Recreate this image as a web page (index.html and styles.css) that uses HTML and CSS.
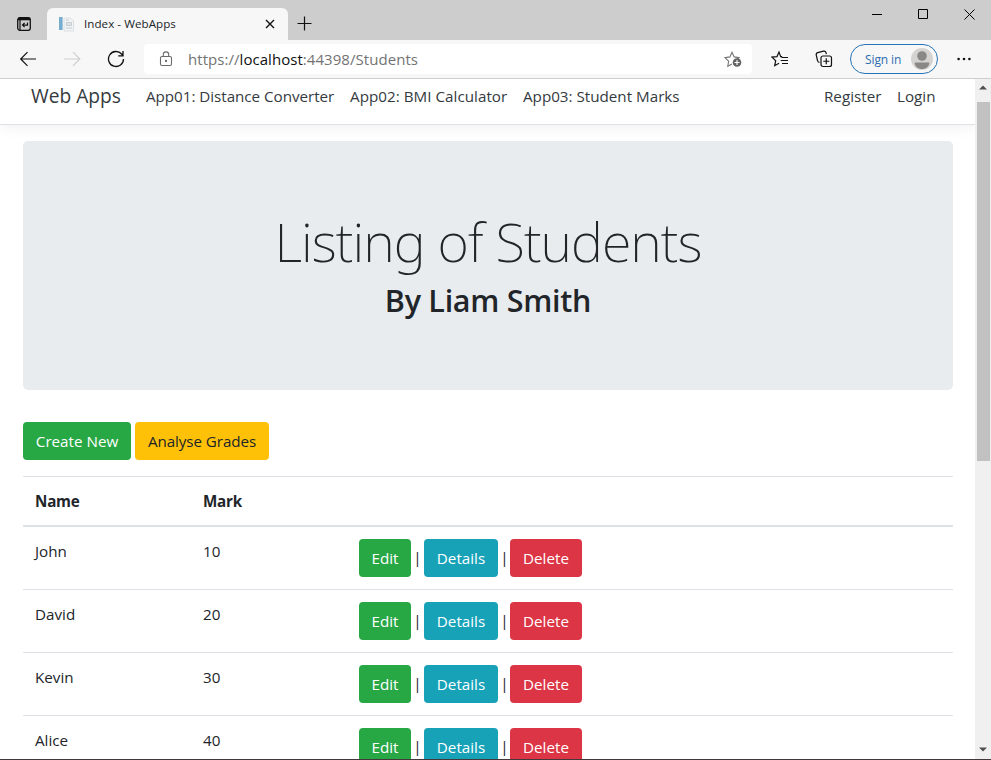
FILE: index.html
```html
<!DOCTYPE html>
<html lang="en">
<head>
<meta charset="utf-8">
<title>Index - WebApps</title>
<link rel="stylesheet" href="styles.css">
</head>
<body>
<div class="window">
  <div class="titlebar">
    <svg class="tab-actions" width="16" height="16" viewBox="0 0 16 16" fill="none" stroke="#111" stroke-width="1.3"><rect x="1.700" y="1.700" width="12.600" height="12.600" rx="2.200"/><path d="M2 3H14" stroke-width="2.600"/><path d="M4 3V14" stroke-width="1.200"/><path d="M11.500 6.500v2.600H6.800M8.600 7 6.500 9.100l2.100 2.100" stroke-width="1.200"/></svg>
    <div class="tab">
      <svg width="17" height="17" viewBox="0 0 17 17"><path d="M1 1h3.600v13H1z" fill="#75add0"/><path d="M6 2h6.500l3 3v10H6z" fill="#f1f3f4" stroke="#dce0e4"/><path d="M8 4h3M8.500 6.500h5v3h-5zM8 12h6" fill="#dfe4e8" stroke="#c4ccd3"/></svg>
      <span class="tab-title">Index - WebApps</span>
      <svg class="tab-close" width="10" height="10" viewBox="0 0 10 10" stroke="#111" stroke-width="1.4"><path d="M1 1l8 8M9 1 1 9"/></svg>
    </div>
    <svg class="new-tab" width="15" height="15" viewBox="0 0 15 15" stroke="#111" stroke-width="1.2"><path d="M7.5.5v14M.5 7.5h14"/></svg>
    <div class="window-controls">
      <svg width="10" height="12" viewBox="0 0 10 12" stroke="#000"><path d="M0 6.5h10"/></svg>
      <svg width="10" height="10" viewBox="0 0 10 10" stroke="#000" fill="none"><path d="M.5.5h9v9h-9z"/></svg>
      <svg width="11" height="11" viewBox="0 0 11 11" stroke="#000"><path d="M.5.5l10 10M10.500.5l-10 10"/></svg>
    </div>
  </div>
  <div class="toolbar">
    <svg class="back" width="18" height="16" viewBox="0 0 18 16" fill="none" stroke="#111" stroke-width="1.2"><path d="M17 8H2M8.500 1.200 1.700 8l6.800 6.800"/></svg>
    <svg class="forward" width="18" height="16" viewBox="0 0 18 16" fill="none" stroke="#cfcfcf" stroke-width="1.2"><path d="M0 8h15.500M9 1.200 15.800 8 9 14.800"/></svg>
    <svg class="reload" width="18" height="18" viewBox="0 0 18 18" fill="none" stroke="#111" stroke-width="1.300"><path d="M16.500 9A7.500 7.500 0 1 1 14.600 4L16 5.600M16 1v4.800h-4.800"/></svg>
    <div class="address">
      <svg width="14" height="16" viewBox="0 0 14 16" fill="none" stroke="#6b6b6b" stroke-width="1.1"><rect x="1.500" y="5.500" width="11" height="9" rx="1.500"/><path d="M4.300 5.500V3.600a2.700 2.700 0 0 1 5.400 0v1.900"/><circle cx="7" cy="10" r=".6" fill="#6b6b6b"/></svg>
      <span class="url">https://<b>localhost</b>:44398/Students</span>
      <svg class="favourite" width="18" height="18" viewBox="0 0 18 18" fill="none" stroke="#737373" stroke-width="1.1"><path d="M8 14l-4.200 2.200.8-5L1 7.600l4.900-.7L8 2.300l2.200 4.600 4.900.7-1.600 1.500"/><circle cx="13" cy="12.500" r="4.300" fill="#626262" stroke="none"/><path d="M13 10v5M10.500 12.500h5" stroke="#fff"/></svg>
    </div>
    <svg class="favourites" width="18" height="18" viewBox="0 0 18 18" fill="none" stroke="#111" stroke-width="1.200"><path d="M11.200 6.700H9.700L8 2 6 6.600 1 7.100l3.700 3.600-1 5L8 13.300M10.500 7.500H17M9.700 10.500H17M11 13.500h6"/></svg>
    <svg class="collections" width="18" height="18" viewBox="0 0 18 18" fill="none" stroke="#111" stroke-width="1.200"><rect x="6" y="6" width="10.500" height="10.500" rx="2"/><path d="M11.250 8.300v6M8.300 11.250h6M4.500 12.500c-1.200-.2-1.800-1-2-2L1.200 5c-.2-1.200.4-2 1.500-2.300L8.500 1.200c1.200-.3 2.200.3 2.500 1.500l.4 1.500"/></svg>
    <div class="signin"><span>Sign in</span>
      <svg width="22" height="22" viewBox="0 0 22 22"><circle cx="11" cy="11" r="11" fill="#d5d3d1"/><circle cx="11" cy="8" r="4.800" fill="#8a8886"/><path d="M3.700 14.500h14.600c0 4-3 6.500-7.300 6.500s-7.300-2.500-7.300-6.500z" fill="#8a8886"/></svg>
    </div>
    <svg class="more" width="14" height="4" viewBox="0 0 14 4" fill="#111"><circle cx="1.600" cy="2" r="1.300"/><circle cx="7" cy="2" r="1.300"/><circle cx="12.400" cy="2" r="1.300"/></svg>
  </div>
  <div class="viewport">
    <div class="page">
      <nav class="navbar">
        <a class="brand">Web Apps</a>
        <a class="n1">App01: Distance Converter</a>
        <a class="n2">App02: BMI Calculator</a>
        <a class="n3">App03: Student Marks</a>
        <a class="n4">Register</a>
        <a class="n5">Login</a>
      </nav>
      <main>
        <header class="jumbotron">
          <h1>Listing of Students</h1>
          <h2>By Liam Smith</h2>
        </header>
        <div class="actions"><a class="btn green create">Create New</a><a class="btn yellow analyse">Analyse Grades</a></div>
        <div class="table">
          <div class="row head"><span>Name</span><span>Mark</span></div>
          <div class="row"><span>John</span><span>10</span><div class="links"><a class="btn green edit">Edit</a><i>|</i><a class="btn teal details">Details</a><i>|</i><a class="btn red delete">Delete</a></div></div>
          <div class="row"><span>David</span><span>20</span><div class="links"><a class="btn green edit">Edit</a><i>|</i><a class="btn teal details">Details</a><i>|</i><a class="btn red delete">Delete</a></div></div>
          <div class="row"><span>Kevin</span><span>30</span><div class="links"><a class="btn green edit">Edit</a><i>|</i><a class="btn teal details">Details</a><i>|</i><a class="btn red delete">Delete</a></div></div>
          <div class="row"><span>Alice</span><span>40</span><div class="links"><a class="btn green edit">Edit</a><i>|</i><a class="btn teal details">Details</a><i>|</i><a class="btn red delete">Delete</a></div></div>
        </div>
      </main>
    </div>
    <div class="scrollbar">
      <svg width="8" height="5" viewBox="0 0 8 5" fill="#505050"><path d="M0 4.500 4 .5l4 4z"/></svg>
      <div class="thumb"></div>
      <svg class="down" width="8" height="5" viewBox="0 0 8 5" fill="#505050"><path d="M0 .5h8l-4 4z"/></svg>
    </div>
  </div>
</div>
</body>
</html>
```
FILE: styles.css
```css
* { box-sizing: border-box; }
body { margin: 0; font-family: "Open Sans", "Noto Sans", sans-serif; font-size: 15.2px; color: #212529; background: #fff; }
svg { display: block; flex: none; }
a, span { white-space: nowrap; }
.window { width: 991px; height: 760px; display: flex; flex-direction: column; overflow: hidden; border-bottom: 1px solid #44373c; }
.titlebar { height: 40px; flex: none; display: flex; background: #cdcdcd; }
.tab-actions { margin: 16px 0 0 16px; }
.tab { width: 241px; height: 32px; margin: 8px 0 0 15px; padding: 0 13px 0 11px; display: flex; align-items: center; background: #f7f7f7; border-radius: 6px 6px 0 0; font-size: 11.6px; }
.tab-title { margin-left: 9px; padding-bottom: 2px; letter-spacing: .05px; }
.tab-close { margin-left: auto; }
.new-tab { margin: 16px 0 0 9px; }
.window-controls { display: flex; align-items: center; height: 28px; margin-left: auto; gap: 36px; padding-right: 16px; }
.toolbar { height: 39px; flex: none; display: flex; align-items: center; background: #f7f7f7; border-bottom: 1px solid #cecece; }
.back { margin-left: 19px; }
.forward { margin-left: 27px; }
.reload { margin-left: 25px; }
.address { width: 608px; height: 30px; margin-left: 19px; padding: 0 10px 0 15px; display: flex; align-items: center; background: #fff; border-radius: 4px; color: #737373; }
.url { margin-left: 15px; font-size: 15px; letter-spacing: .05px; }
.url b { font-weight: 400; color: #111; }
.favourite { margin-left: auto; }
.favourites { margin-left: 19px; }
.collections { margin-left: 26px; }
.signin { width: 88px; height: 30px; margin-left: 17px; padding: 0 4px 0 14px; display: flex; align-items: center; justify-content: space-between; border: 1px solid #2674b8; border-radius: 15px; color: #2b6cb0; font-size: 12px; }
.signin span { letter-spacing: -.1px; }
.more { margin-left: 19px; }
.viewport { flex: 1; min-height: 0; display: flex; }
.page { width: 975px; overflow: hidden; }
.navbar { height: 46px; padding: 0 39px 11px 31px; display: flex; align-items: center; border-bottom: 1px solid #dee2e6; box-shadow: 0 4px 12px rgba(0,0,0,.05); color: #343a40; line-height: 24px; }
.brand { width: 115px; font-size: 19.2px; }
.n1 { width: 204px; letter-spacing: -.03px; }
.n2 { width: 173px; letter-spacing: .03px; }
.n3 { width: 301px; }
.n4 { width: 73px; }
main { padding: 16px 22px 0 23px; }
.jumbotron { height: 249px; padding-top: 62px; border-radius: 5px; background: #e9ecef; text-align: center; }
h1 { margin: 0; font-size: 54px; line-height: 76px; font-weight: 200; font-family: "Noto Sans", "Open Sans", sans-serif; letter-spacing: -1px; }
h2 { margin: 1px 0 0; font-size: 30.5px; line-height: 40px; font-weight: 600; letter-spacing: -.28px; }
.actions { display: flex; gap: 4px; margin-top: 32px; }
.btn { height: 38px; display: flex; align-items: center; justify-content: center; border-radius: 4px; color: #fff; }
.green { background: #28a745; }
.yellow { background: #ffc107; color: #212529; }
.teal { background: #17a2b8; }
.red { background: #dc3545; }
.create { width: 108px; }
.analyse { width: 134px; letter-spacing: -.08px; }
.table { margin-top: 16px; }
.row { height: 63px; display: grid; grid-template-columns: 168px 156px 1fr; padding: 12px 12px 0; border-top: 1px solid #dee2e6; line-height: 24px; }
.head { height: 49px; font-weight: 700; letter-spacing: -.2px; }
.head + .row { height: 64px; border-top-width: 2px; }
.links { display: flex; align-items: center; height: 38px; }
.links i { width: 13px; padding-bottom: 3px; text-align: center; font-style: normal; }
.edit { width: 52px; }
.details { width: 74px; }
.links i + .delete { width: 72px; margin-left: -1px; }
.scrollbar { width: 16px; display: flex; flex-direction: column; align-items: center; background: #f0f0f0; padding-top: 6px; }
.thumb { width: 13px; height: 359px; margin-top: 12px; background: #c1c1c1; }
.down { margin: auto 0 7px; }
```
